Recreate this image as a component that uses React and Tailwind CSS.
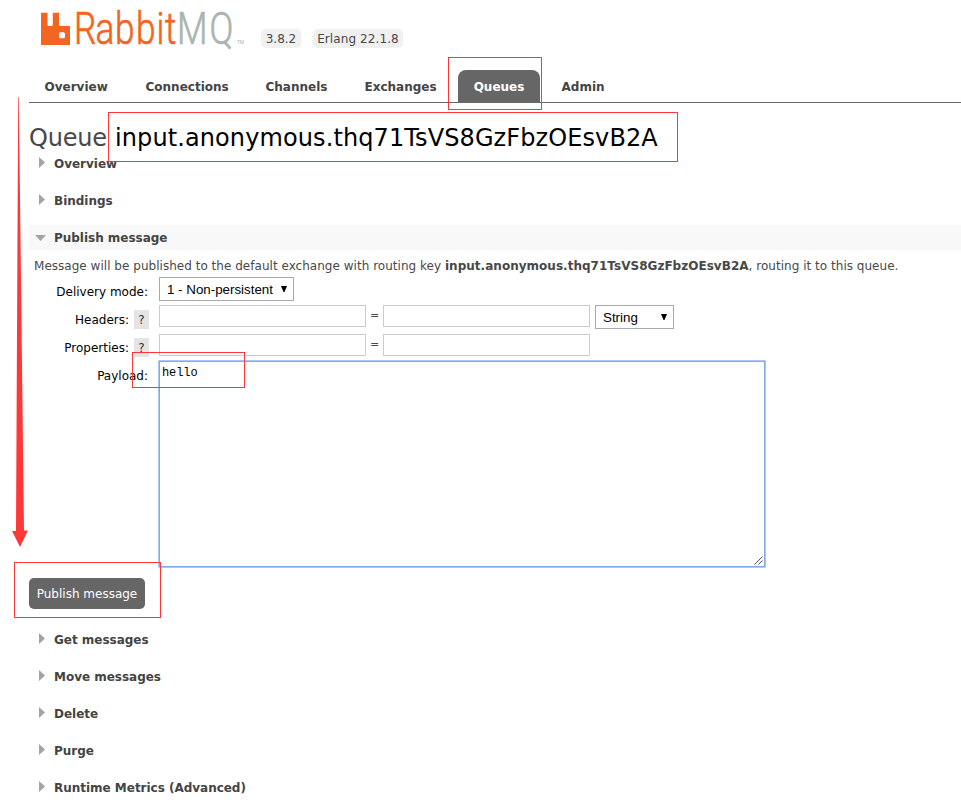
import React from "react";

function Triangle({ open }) {
  return open ? (
    <svg width="11" height="6" viewBox="0 0 11 6" className="ml-[6px] mr-[8px] block shrink-0">
      <path d="M0 0H11L5.5 6Z" fill="#a3a3a3" />
    </svg>
  ) : (
    <svg width="6" height="11" viewBox="0 0 6 11" className="-mt-[2px] ml-[10px] mr-[9px] block shrink-0">
      <path d="M0 0L6 5.5L0 11Z" fill="#a3a3a3" />
    </svg>
  );
}

function Section({ title, open }) {
  return (
    <h2 className={`flex h-[25px] items-center text-[12px] font-bold text-[#444] ${open ? "bg-[#f8f8f8]" : ""}`}>
      <Triangle open={open} />
      <span className="tracking-[-0.02px]">{title}</span>
    </h2>
  );
}

function Tab({ label, width }) {
  return (
    <a className={`flex h-8 items-center pl-[15.5px] pt-[2px] ${width}`}>
      <span>{label}</span>
    </a>
  );
}

function Select({ label, size }) {
  return (
    <div className={`flex h-6 items-center justify-between border border-[#a9a9a9] bg-white pl-[7px] pr-[6px] font-['Liberation_Sans',sans-serif] text-[13.33px] text-black ${size}`}>
      <span className="pt-px">{label}</span>
      <svg width="6" height="6" viewBox="0 0 6 6" className="-mt-[1px]">
        <path d="M0 0H6L3.500 6H2.500Z" fill="#000" />
      </svg>
    </div>
  );
}

function Label({ children, help }) {
  return (
    <div className={`flex h-[19px] items-center justify-end text-black ${help ? "-mr-px w-[120px]" : "w-[119px]"}`}>
      <span>{children}</span>
      {help && <span className="ml-[5px] flex h-[19px] w-[15px] items-center justify-center bg-[#e4e4e4] text-[#333]">?</span>}
    </div>
  );
}

function Pair() {
  return (
    <>
      <div className="ml-[11px] h-[22px] w-[207px] border border-[#ccc] bg-white" />
      <span className="flex h-[22px] w-[17px] items-center justify-center text-[11px]">=</span>
      <div className="h-[22px] w-[207px] border border-[#ccc] bg-white" />
    </>
  );
}

function Logo() {
  return (
    <svg width="215" height="60" viewBox="0 0 215 60" className="block">
      <path
        d="M1 12.7H7.5V24.5Q7.5 26 9 26H11.3Q12.8 26 12.8 24.5V12.7H19V24.5Q19 26 20.5 26H30V45H1Z"
        fill="#f26522"
      />
      <rect x="19" y="32.200" width="6" height="6" rx="1.500" fill="#fff" />
      <g transform="scale(0.8 1)" fontFamily="Roboto, sans-serif" fontWeight="300" fontSize="44" strokeWidth="0.7">
        <text x="42.5 69.4 93.75 120 145.6 156.25" y="44" fill="#f26522" stroke="#f26522">Rabbit</text>
        <text x="171.25 211.9" y="44" fill="#a9b5af" stroke="#a9b5af">MQ</text>
      </g>
      <text x="197" y="44" fontFamily="Roboto, sans-serif" fontSize="6" textLength="7" lengthAdjust="spacingAndGlyphs" fill="#a9b5af">TM</text>
    </svg>
  );
}

export default function App() {
  return (
    <div className="relative h-[805px] w-[961px] overflow-hidden bg-white font-['DejaVu_Sans',sans-serif] text-[12px] leading-[16px] text-[#484848]">
      <div className="pl-[29px]">
        <header className="flex h-[70px] pl-[11px]">
          <Logo />
          <div className="ml-[6px] mt-[29px] flex h-[19px] gap-[12px]">
            <span className="flex w-[40px] items-center justify-center rounded-[5px] bg-[#f0f0f0]">3.8.2</span>
            <span className="flex w-[90px] items-center justify-center rounded-[5px] bg-[#f0f0f0] tracking-[0.1px]">Erlang 22.1.8</span>
          </div>
        </header>

        <nav className="flex h-[33px] border-b border-[#666] text-[12px] font-bold text-[#444]">
          <Tab label="Overview" width="w-[101px]" />
          <Tab label="Connections" width="w-[120px]" />
          <Tab label="Channels" width="w-[99px]" />
          <Tab label="Exchanges" width="w-[109px]" />
          <a className="flex h-8 w-[82px] items-center justify-center rounded-t-[8px] bg-[#666] pt-[2px] text-white">Queues</a>
          <Tab label="Admin" width="ml-[6px] w-[80px]" />
        </nav>

        <h1 className="flex h-[48px] items-start whitespace-nowrap pt-[20px] text-[24px] leading-[30px]">
          <span className="w-[86px] tracking-[-0.2px]">Queue</span>
          <span className="tracking-[0.1px] text-black">input.anonymous.thq71TsVS8GzFbzOEsvB2A</span>
        </h1>

        <div className="flex flex-col gap-3">
          <Section title="Overview" />
          <Section title="Bindings" />
          <Section title="Publish message" open />
        </div>

        <p className="h-[27px] whitespace-nowrap pl-[5px] pt-[8px] tracking-[0.025px]">
          <span>Message will be published to the default exchange with routing key </span>
          <b>input.anonymous.thq71TsVS8GzFbzOEsvB2A</b>
          <span>, routing it to this queue.</span>
        </p>

        <div className="flex h-[28px]">
          <div className="pt-[5px]"><Label>Delivery mode:</Label></div>
          <div className="ml-[11px]"><Select label="1 - Non-persistent" size="w-[135px]" /></div>
        </div>
        <div className="flex h-[29px]">
          <div className="pt-[5px]"><Label help>Headers:</Label></div>
          <Pair />
          <div className="ml-[5px]"><Select label="String" size="w-[79px]" /></div>
        </div>
        <div className="flex h-[26px]">
          <div className="pt-[4px]"><Label help>Properties:</Label></div>
          <Pair />
        </div>
        <div className="flex h-[218px]">
          <div className="pt-[6px]"><Label>Payload:</Label></div>
          <div className="ml-[10px] h-[208px] w-[608px] rounded-[1px] border border-[#a8c7fa]">
            <div className="flex h-full flex-col justify-between border border-[#84a9e8] bg-white">
              <span className="pl-[2px] pt-[3px] font-['Liberation_Mono',monospace] text-[12px] tracking-[-0.1px] text-black">hello</span>
              <svg width="9" height="9" viewBox="0 0 9 9" className="mb-px mr-px self-end">
                <path d="M0.500 8.500L8.500 0.500M4.500 8.500L8.500 4.500" stroke="#555" strokeWidth="1" />
              </svg>
            </div>
          </div>
        </div>

        <button className="flex h-[31px] w-[116px] items-center justify-center whitespace-nowrap rounded-[5px] bg-[#666] text-white">
          <span>Publish message</span>
        </button>

        <div className="mt-[18px] flex flex-col gap-3">
          <Section title="Get messages" />
          <Section title="Move messages" />
          <Section title="Delete" />
          <Section title="Purge" />
          <Section title="Runtime Metrics (Advanced)" />
        </div>
      </div>

      {/* Red annotations over the page */}
      <div className="absolute left-[448px] top-[57px] h-[53px] w-[94px] border border-[#fe3838]" />
      <div className="absolute left-[108px] top-[112px] h-[50px] w-[570px] border border-[#fe3838]" />
      <div className="absolute left-[132px] top-[352px] h-[36px] w-[113px] border border-[#fe3838]" />
      <div className="absolute left-[14px] top-[562px] h-[56px] w-[147px] border border-[#fe3838]" />
      <svg width="20" height="452" viewBox="0 0 20 452" className="absolute left-[10px] top-[97px]">
        <path d="M8.200 0H8.800L14 433.500H18L10 450L2 434H6Z" fill="#fe3838" />
      </svg>
    </div>
  );
}
